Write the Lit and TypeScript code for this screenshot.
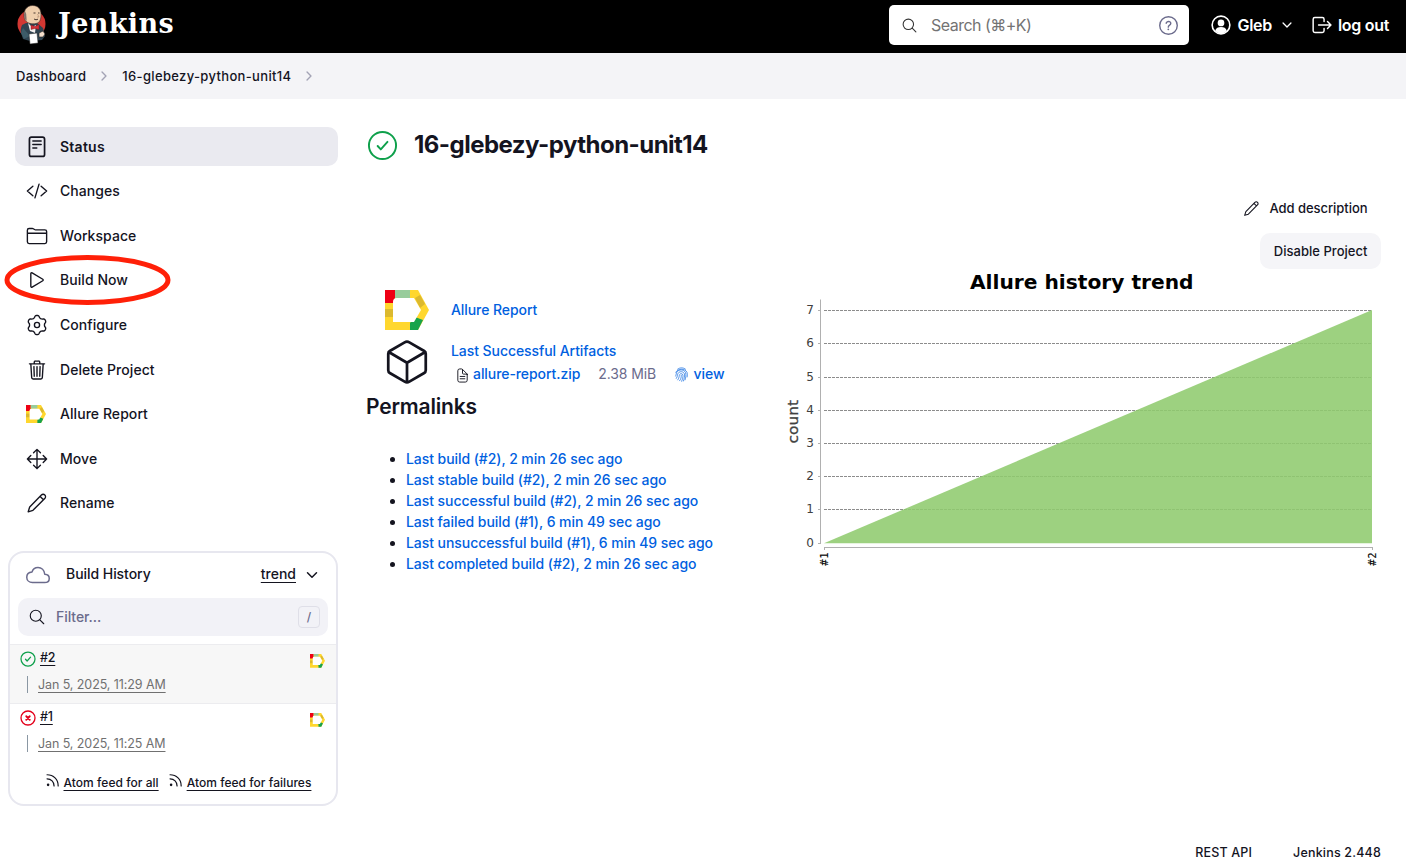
import { LitElement, html, css, svg } from "lit";
import { customElement, property } from "lit/decorators.js";

const gearPath = (): string => {
  let d = "";
  for (let i = 0; i < 96; i++) {
    const t = (i / 96) * Math.PI * 2;
    const c = Math.cos(6 * t + Math.PI);
    const r = 198 + 25 * Math.sign(c) * Math.pow(Math.abs(c), 0.55);
    d += `${i ? "L" : "M"}${(256 + r * Math.cos(t)).toFixed(1)} ${(256 + r * Math.sin(t)).toFixed(1)}`;
  }
  return d + "Z";
};

const icons: Record<string, unknown> = {
  status: svg`<rect x="80" y="26" width="352" height="450" rx="48" stroke-width="40"/><path d="M160 118h192M160 198h192M160 278h90" stroke-width="36"/>`,
  code: svg`<path d="M160 368L32 256l128-112M352 368l128-112-128-112M304 96l-96 320"/>`,
  folder: svg`<path d="M440 432H72a40 40 0 01-40-40V120a40 40 0 0140-40h75.89a40 40 0 0122.19 6.72l27.84 18.56a40 40 0 0022.19 6.72H440a40 40 0 0140 40v240a40 40 0 01-40 40zM32 192h448"/>`,
  play: svg`<path d="M112 111v290c0 17.44 17 28.52 31 20.16l247.9-148.37c12.12-7.25 12.12-26.33 0-33.58L143 90.84c-14-8.36-31 2.72-31 20.16z"/>`,
  gear: svg`<path d=${gearPath()}/><circle cx="256" cy="256" r="60"/>`,
  trash: svg`<path d="M112 112l20 320c.95 18.49 14.4 32 32 32h184c17.67 0 30.87-13.51 32-32l20-320M80 112h352M192 112V72a23.93 23.93 0 0124-24h80a23.93 23.93 0 0124 24v40M256 176v224M184 176l8 224M328 176l-8 224"/>`,
  move: svg`<path d="M176 112l80-80 80 80M256 32v448M176 400l80 80 80-80M400 176l80 80-80 80M112 176l-80 80 80 80M32 256h448"/>`,
  pencil: svg`<path d="M50 462l36-112L358 72c24-24 58-24 80-2s22 56-2 80L162 426zM330 104l76 76"/>`,
  cloud: svg`<path d="M400 240c-8.89-89.54-71-144-144-144-69 0-113.44 48.2-128 96-60 6-112 43.59-112 112 0 66 54 112 120 112h260c55 0 100-27.44 100-88 0-59.82-53-85.76-96-88z"/>`,
  cube: svg`<path d="M448 341.37V170.61A32 32 0 00432.11 143l-152-88.46a47.94 47.94 0 00-48.24 0L79.89 143A32 32 0 0064 170.61v170.76A32 32 0 0079.89 369l152 88.46a48 48 0 0048.24 0l152-88.46A32 32 0 00448 341.37zM69 154l187 110 187-110M256 464V264"/>`,
  search: svg`<circle cx="221" cy="221" r="157"/><path d="M338 338l110 110"/>`,
  down: svg`<path d="M112 184l144 144 144-144"/>`,
  right: svg`<path d="M184 112l144 144-144 144"/>`,
  help: svg`<circle cx="256" cy="256" r="214"/><path d="M200 202s1-17 20-32c11-9 24-12 36-12 11 0 21 2 27 5 10 4 29 16 29 41 0 26-17 38-36 50s-25 24-25 42"/><circle class="dot" cx="251" cy="350" r="22"/>`,
  user: svg`<circle cx="256" cy="256" r="206"/><circle class="dot" cx="256" cy="208" r="78"/><path class="dot" d="M120 390c20-62 70-86 136-86s116 24 136 86c-36 40-84 66-136 66s-100-26-136-66z"/>`,
  logout: svg`<path d="M304 336v56a40 40 0 01-40 40H90a40 40 0 01-40-40V120a40 40 0 0140-40h174c22 0 40 18 40 40v56M384 336l80-80-80-80M176 256h280"/>`,
  ok: svg`<circle cx="256" cy="256" r="224"/><path d="M176 264l52 56 110-124"/>`,
  fail: svg`<circle cx="256" cy="256" r="224"/><path stroke-width="58" d="M200 200l112 112M312 200L200 312"/>`,
  doc: svg`<path d="M416 221v195a64 64 0 01-64 64H160a64 64 0 01-64-64V96a64 64 0 0164-64h67a32 32 0 0123 9l157 157a32 32 0 019 23zM256 56v120a32 32 0 0032 32h120M176 288h160M176 368h160"/>`,
  rss: svg`<path d="M70 60c220 0 380 160 380 380M70 200c140 0 240 100 240 240"/><circle class="dot" cx="106" cy="404" r="44"/>`,
  finger: svg`<path d="M120 76C200 10 320 10 396 78M60 180c70-142 314-142 384 0 16 50 16 110 6 160M56 310c30-50 10-90 44-140 70-100 240-90 294 20 24 80 10 160-16 250M80 390c50-80 30-130 62-180 60-80 190-60 214 30 12 80-8 170-36 240M130 440c60-90 40-140 60-180 30-54 106-40 114 20 8 70-14 140-44 206M190 470c50-60 62-120 58-190"/>`,
};

@customElement("ui-icon")
class UiIcon extends LitElement {
  @property() name = "";
  @property({ type: Number }) size = 22;
  @property({ type: Number }) weight = 32;
  static styles = css`
    :host { display: block; flex: none; }
    svg { display: block; overflow: visible; fill: none; stroke: currentColor; stroke-linecap: round; stroke-linejoin: round; }
    .dot { fill: currentColor; stroke: none; }
  `;
  render() {
    return html`<svg width=${this.size} height=${this.size} viewBox="0 0 512 512" stroke-width=${this.weight}>${icons[this.name]}</svg>`;
  }
}

@customElement("allure-logo")
class AllureLogo extends LitElement {
  @property({ type: Number }) size = 44;
  static styles = css`
    :host { display: block; flex: none; }
    svg { display: block; }
  `;
  render() {
    return html`<svg width=${this.size} height=${(this.size * 40) / 44} viewBox="0 0 44 40">
      <path d="M0 0h33l11 20-11 20H0z" fill="#ffd72e"/>
      <path d="M30 8l5-3 5 9-5 4z" fill="#dcb92e"/>
      <path d="M0 19h8v8H0z" fill="#dcb92e"/>
      <path d="M10 0h15v8H10z" fill="#98cc9b"/>
      <path d="M0 0h10v8l-2 5H0z" fill="#ee0014"/>
      <path d="M25 33l5-6 8 3-5 10h-8z" fill="#17a34a"/>
      <path d="M8 12q0-4 4-4h17l7 12-7 12H8z" fill="#fff"/>
    </svg>`;
  }
}

@customElement("trend-chart")
class TrendChart extends LitElement {
  static styles = css`
    :host { display: block; }
    svg { display: block; font-family: "DejaVu Sans", sans-serif; }
    .title { font-size: 19.5px; font-weight: 700; fill: #000; }
    .tick { font-size: 12px; fill: #404040; text-anchor: end; }
    .axis { stroke: #b0b0b0; stroke-width: 1; fill: none; }
    .grid { stroke: #8c8c8c; stroke-width: 1; stroke-dasharray: 3 1; }
    .label { font-size: 14.5px; fill: #404040; stroke: #404040; stroke-width: .3; }
    .cat { font-size: 10.5px; fill: #000; stroke: #000; stroke-width: .15; }
  `;
  render() {
    const rows = [0, 1, 2, 3, 4, 5, 6, 7];
    const y = (v: number) => Math.floor(543 - v * 33.2) + 0.5;
    return html`<svg width="600" height="300" viewBox="781 270 600 300">
      <text class="title" x="970" y="289" textLength="223.500" lengthAdjust="spacingAndGlyphs">Allure history trend</text>
      ${rows.map((v) => svg`<text class="tick" x="814" y=${y(v) + 3.5}>${v}</text>
        <path class="axis" d=${`M818 ${y(v)}h3`}/>
        ${v ? svg`<path class="grid" d=${`M824 ${y(v)}H1372`}/>` : ""}`)}
      <path class="axis" d="M820.5 299.500V543.500M824 547.500H1373M824.500 547v3M1372.500 547v3"/>
      <path d="M824 543.300L1372 310V543.300z" fill="#90cb6e" fill-opacity=".88"/>
      <text class="label" transform="translate(798 443.500) rotate(-90)" textLength="43.500" lengthAdjust="spacingAndGlyphs">count</text>
      <text class="cat" transform="translate(827.500 566.500) rotate(-90)" textLength="14" lengthAdjust="spacingAndGlyphs">#1</text>
      <text class="cat" transform="translate(1375.500 566.500) rotate(-90)" textLength="14" lengthAdjust="spacingAndGlyphs">#2</text>
    </svg>`;
  }
}

@customElement("app-root")
class AppRoot extends LitElement {
  static styles = css`
    :host { display: block; position: relative; width: 1406px; height: 864px; overflow: hidden; background: #fff; color: #14141f; font: 500 14px/20px Inter, sans-serif; box-sizing: border-box; }
    * { box-sizing: border-box; }
    header { height: 53px; background: #000; color: #fff; display: flex; align-items: center; padding: 0 17px 3px 16px; }
    .mascot { display: block; width: 32px; height: 42px; margin: -1px 10px 0 0; }
    .brand { font: 700 27px/32px "DejaVu Serif", serif; flex: 1; margin-top: -3px; letter-spacing: .38px; }
    .search { width: 300px; height: 40px; background: #fff; border-radius: 5px; display: flex; align-items: center; padding: 0 10px 0 12px; color: #333; }
    .search span { flex: 1; margin-left: 13.500px; color: #737373; font-size: 16px; font-weight: 400; letter-spacing: -.52px; }
    .search .help { color: #6b6b8c; }
    .user { display: flex; align-items: center; margin-left: 21px; font-size: 16px; font-weight: 600; letter-spacing: -.3px; }
    .user span { margin: 0 8px 0 6px; }
    .logout { display: flex; align-items: center; gap: 4.500px; margin-left: 17.500px; font-size: 16px; font-weight: 600; letter-spacing: -.3px; }
    .crumbs { height: 46px; background: #f4f4f7; display: flex; align-items: center; padding-left: 16px; font-size: 13px; letter-spacing: .28px; }
    .crumbs .project { letter-spacing: .34px; }
    .crumbs ui-icon { color: #a3a3b5; margin: 0 11px; }
    .page { display: flex; height: 765px; }
    aside { width: 338px; padding: 28px 0 0 8px; flex: none; }
    nav { display: flex; flex-direction: column; gap: 5.620px; margin-left: 7px; }
    .item { height: 39px; border-radius: 10px; display: flex; align-items: center; gap: 12px; padding-left: 11px; font-size: 14px; letter-spacing: .06px; }
    .item.on { background: #eaeaf0; font-weight: 600; letter-spacing: .25px; }
    .item allure-logo { margin: 0 2px 0 0; }
    .history { width: 330px; height: 255px; margin-top: 28px; border: 2px solid #e7e7ef; border-radius: 16px; }
    .hhead { height: 45px; display: flex; align-items: center; padding: 0 16px 3px 16px; }
    .hhead ui-icon:first-child { color: #6b6b8c; margin-top: 2px; }
    .hhead .name { flex: 1; margin-left: 16px; letter-spacing: -.05px; }
    .hhead .drop { margin: 2px 0 0 8px; }
    u { text-underline-offset: 2.500px; text-decoration-thickness: 1px; }
    .filter { height: 38px; margin: 0 8px; background: #f2f2f7; border-radius: 10px; display: flex; align-items: center; padding: 0 8px 0 10px; }
    .filter span { flex: 1; margin-left: 10px; color: #6b6b8c; letter-spacing: -.05px; }
    .filter kbd { font: 500 12px/20px Inter, sans-serif; color: #6b6b8c; width: 22px; height: 22px; border: 1px solid #dfdfe8; border-radius: 4px; text-align: center; }
    .build { height: 59px; border-top: 1px solid #ececef; display: flex; justify-content: space-between; padding: 4px 11px 0 10px; font-size: 12.500px; }
    .build.first { background: #f7f7f7; margin-top: 8px; }
    .build allure-logo { margin-top: 5px; }
    .bname { display: flex; align-items: center; gap: 4px; height: 20px; }
    .ok { color: #0ea04b; }
    .bad { color: #e3001b; }
    .bname u { margin-top: -1px; letter-spacing: -.2px; }
    .date { display: flex; align-items: center; margin: 7px 0 0 7px; height: 17px; border-left: 1px solid #8a97a3; padding: 2px 0 0 10px; color: #707070; font-weight: 400; font-size: 12.500px; letter-spacing: -.09px; }
    .feeds { display: flex; gap: 9px; padding: 11px 0 0 34.500px; font-size: 12px; letter-spacing: .04px; }
    .feed { display: flex; gap: 4px; align-items: center; }
    .feed ui-icon { margin-top: -5px; }
    main { flex: 1; position: relative; display: flex; flex-direction: column; padding: 29px 25px 0 28px; }
    .title { display: flex; align-items: center; gap: 16.500px; height: 34px; }
    .title ui-icon { margin: 0 0 0 .5px; }
    h1 { margin: 0; font-size: 24px; line-height: 34px; font-weight: 700; letter-spacing: -.53px; }
    .cols { display: flex; justify-content: space-between; padding-top: 38px; }
    .left { padding-top: 90px; }
    .right { display: flex; flex-direction: column; align-items: flex-end; }
    .desc { display: flex; align-items: center; gap: 9.500px; height: 16px; margin-right: 13.500px; font-size: 13px; letter-spacing: -.05px; }
    .disable { height: 36px; padding: 0 13.500px; margin: 17px 0 1px; border-radius: 10px; background: #f5f5f8; font-size: 13px; line-height: 36px; letter-spacing: .03px; }
    .blue { color: #0060df; letter-spacing: -.07px; }
    .row { display: flex; align-items: center; margin-left: 19px; }
    .row allure-logo { margin-right: 22px; }
    .arts { display: flex; margin: 7px 0 0 16px; height: 50px; gap: 19px; }
    .artlist { padding-top: 4px; }
    .file { display: flex; align-items: center; margin: 3px 0 0 3.500px; }
    .file ui-icon:first-child { margin-top: 3px; }
    .file .blue { margin-left: 3.500px; }
    .size { color: #6b6b8c; font-weight: 400; margin: 0 18px; letter-spacing: -.1px; }
    .file ui-icon.blue { margin: 0 1px 0 0; }
    h2 { font-size: 21px; line-height: 26px; font-weight: 600; margin: 7px 0 0; letter-spacing: -.18px; }
    ul { margin: 28px 0 0; padding: 0 0 0 40px; line-height: 21px; }
    li span { color: #0060df; letter-spacing: -.06px; }
    footer { display: flex; justify-content: flex-end; gap: 41px; margin-top: auto; height: 22px; font-size: 12.500px; line-height: 22px; letter-spacing: .18px; }
    .ring { position: absolute; left: 4px; top: 253px; }
  `;
  render() {
    const nav: [string, string][] = [
      ["status", "Status"], ["code", "Changes"], ["folder", "Workspace"], ["play", "Build Now"], ["gear", "Configure"],
      ["trash", "Delete Project"], ["allure", "Allure Report"], ["move", "Move"], ["pencil", "Rename"],
    ];
    const links = [
      "Last build (#2), 2 min 26 sec ago", "Last stable build (#2), 2 min 26 sec ago",
      "Last successful build (#2), 2 min 26 sec ago", "Last failed build (#1), 6 min 49 sec ago",
      "Last unsuccessful build (#1), 6 min 49 sec ago", "Last completed build (#2), 2 min 26 sec ago",
    ];
    return html`
      <header>
        <svg class="mascot" viewBox="16 4 32 42">
          <circle cx="31.500" cy="24" r="14" fill="#d33833"/>
          <path d="M22 25q-2 5-1 8l2 6 7 2 12-1 3-4-2-8-6-5-11 0z" fill="#2f4350"/>
          <path d="M24.500 19c-2-8 2-13.500 8-13.500s8.500 4 8.500 9-1 8-5 9-9.500 0-11.500-4.500z" fill="#efcfad" stroke="#3a2a25" stroke-width=".6"/>
          <path d="M25 11q-2 4-.3 8l2 2-.5-7z" fill="#7d716b"/>
          <path d="M33.500 13h2M38 13h1.500M34 19q2 1.500 4 .2" stroke="#3a2a25" stroke-width=".9" fill="none"/>
          <path d="M37.500 14l1.500 3h-2" stroke="#b98f72" stroke-width=".7" fill="none"/>
          <path d="M28 23l4 4 4-2-1 8-5-2z" fill="#f4f0ee"/>
          <path d="M31 25l4 1.500 4-2v5l-4-1-4 1z" fill="#d32f36" stroke="#6e1518" stroke-width=".4"/>
          <path d="M23 28l7 8-6 3-3-6z" fill="#3d5b68"/>
          <path d="M29 34l8-1 1 10-8 1z" fill="#fff" stroke="#222" stroke-width=".5"/>
          <path d="M39 33l4-2 2 3-2 3-4 0z" fill="#f4dfcc" stroke="#222" stroke-width=".6"/>
        </svg>
        <div class="brand">Jenkins</div>
        <div class="search"><ui-icon name="search" size="17"></ui-icon><span>Search (⌘+K)</span><ui-icon class="help" name="help" size="21" weight="34"></ui-icon></div>
        <div class="user"><ui-icon name="user" size="22" weight="38"></ui-icon><span>Gleb</span><ui-icon name="down" size="14" weight="48"></ui-icon></div>
        <div class="logout"><ui-icon name="logout" size="22" weight="34"></ui-icon>log out</div>
      </header>
      <div class="crumbs"><span>Dashboard</span><ui-icon name="right" size="14" weight="50"></ui-icon><span class="project">16-glebezy-python-unit14</span><ui-icon name="right" size="14" weight="50"></ui-icon></div>
      <div class="page">
        <aside>
          <nav>
            ${nav.map(([i, t], n) => html`<div class="item ${n ? "" : "on"}">
              ${i === "allure" ? html`<allure-logo size="20"></allure-logo>` : html`<ui-icon name=${i}></ui-icon>`}<span>${t}</span></div>`)}
          </nav>
          <section class="history">
            <div class="hhead"><ui-icon name="cloud" size="24"></ui-icon><span class="name">Build History</span><u>trend</u><ui-icon class="drop" name="down" size="16" weight="48"></ui-icon></div>
            <div class="filter"><ui-icon name="search" size="18"></ui-icon><span>Filter...</span><kbd>/</kbd></div>
            <div class="build first">
              <div><div class="bname"><ui-icon class="ok" name="ok" size="16" weight="40"></ui-icon><u>#2</u></div><div class="date"><u>Jan 5, 2025, 11:29 AM</u></div></div>
              <allure-logo size="15"></allure-logo>
            </div>
            <div class="build">
              <div><div class="bname"><ui-icon class="bad" name="fail" size="16" weight="42"></ui-icon><u>#1</u></div><div class="date"><u>Jan 5, 2025, 11:25 AM</u></div></div>
              <allure-logo size="15"></allure-logo>
            </div>
            <div class="feeds">
              <div class="feed"><ui-icon name="rss" size="15" weight="42"></ui-icon><u>Atom feed for all</u></div>
              <div class="feed"><ui-icon name="rss" size="15" weight="42"></ui-icon><u>Atom feed for failures</u></div>
            </div>
          </section>
        </aside>
        <main>
          <div class="title"><ui-icon class="ok" name="ok" size="31" weight="32"></ui-icon><h1>16-glebezy-python-unit14</h1></div>
          <div class="cols">
            <div class="left">
              <div class="row"><allure-logo size="44"></allure-logo><span class="blue">Allure Report</span></div>
              <div class="arts"><ui-icon name="cube" size="50" weight="28"></ui-icon>
                <div class="artlist"><div class="blue">Last Successful Artifacts</div>
                  <div class="file"><ui-icon name="doc" size="15" weight="32"></ui-icon><span class="blue">allure-report.zip</span><span class="size">2.38 MiB</span><ui-icon class="blue" name="finger" size="15" weight="22"></ui-icon><span class="blue">view</span></div>
                </div>
              </div>
              <h2>Permalinks</h2>
              <ul>${links.map((l) => html`<li><span>${l}</span></li>`)}</ul>
            </div>
            <div class="right">
              <div class="desc"><ui-icon name="pencil" size="17" weight="32"></ui-icon><span>Add description</span></div>
              <div class="disable">Disable Project</div>
              <trend-chart></trend-chart>
            </div>
          </div>
          <footer><span>REST API</span><span>Jenkins 2.448</span></footer>
        </main>
      </div>
      <svg class="ring" width="168" height="54"><ellipse cx="83.500" cy="27" rx="80.500" ry="22.500" fill="none" stroke="#ff2008" stroke-width="5"/></svg>
    `;
  }
}
